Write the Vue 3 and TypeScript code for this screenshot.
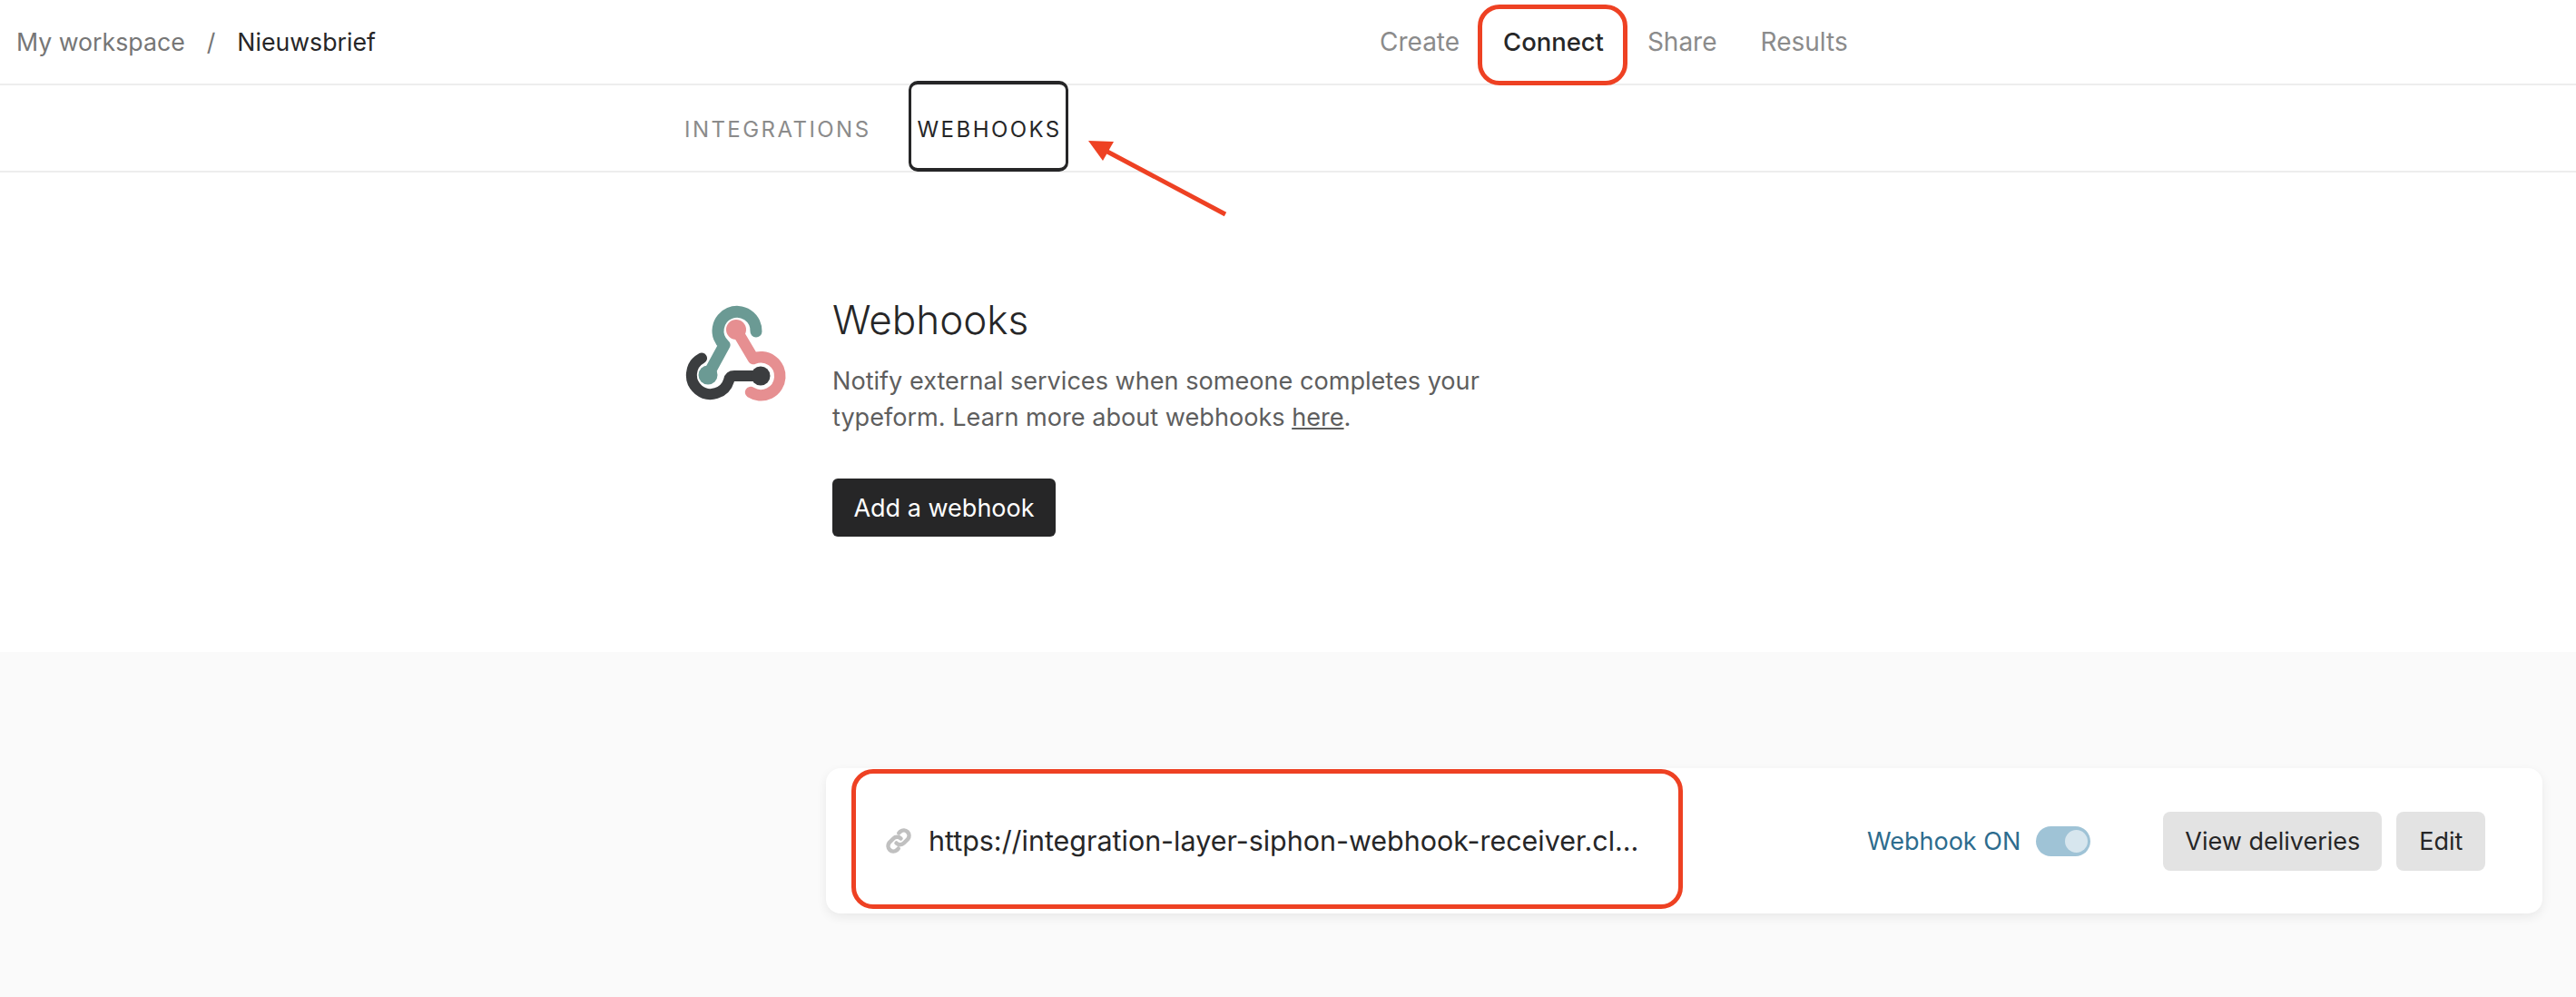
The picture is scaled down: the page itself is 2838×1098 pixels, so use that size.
<script setup lang="ts">
const navItems: { label: string; active?: boolean }[] = [
  { label: 'Create' },
  { label: 'Connect', active: true },
  { label: 'Share' },
  { label: 'Results' },
]
</script>

<template>
  <div class="page">
    <header class="topbar">
      <div class="crumbs">
        <span class="crumb-muted">My workspace</span>
        <span class="crumb-sep">/</span>
        <span class="crumb-current">Nieuwsbrief</span>
      </div>
      <nav class="nav">
        <span
          v-for="item in navItems"
          :key="item.label"
          class="nav-item"
          :class="{ active: item.active }"
        >{{ item.label }}</span>
      </nav>
    </header>

    <div class="tabs">
      <span class="tab">INTEGRATIONS</span>
      <span class="tab tab-active">WEBHOOKS</span>
      <svg class="arrow" width="170" height="100" viewBox="0 0 170 100">
        <line x1="151" y1="81" x2="21" y2="12" stroke="#ee4123" stroke-width="5" />
        <polygon points="0,0 28,1 16,22" fill="#ee4123" />
      </svg>
    </div>

    <section class="intro">
      <svg class="logo" width="114" height="108" viewBox="0 0 114 108" fill="none" stroke-linecap="round" stroke-linejoin="round">
        <path d="M78 30A21 21 0 1 0 43 45L25 78" stroke="#6b9a94" stroke-width="13" />
        <circle cx="25" cy="78" r="10.5" fill="#6b9a94" />
        <path d="M56 28L75 60A21 21 0 1 1 72 97" stroke="#e68f91" stroke-width="12.5" />
        <circle cx="56" cy="28" r="11" fill="#e68f91" />
        <path d="M18 59.5A21 21 0 1 0 48 84Q49 79 54 79L83 79" stroke="#3b3d3f" stroke-width="12" />
        <circle cx="83" cy="79" r="10.5" fill="#3b3d3f" />
      </svg>
      <div class="intro-body">
        <h1 class="title">Webhooks</h1>
        <p class="desc">
          Notify external services when someone completes your<br />typeform. Learn more about webhooks
          <a class="link">here</a>.
        </p>
        <button class="primary" type="button">Add a webhook</button>
      </div>
    </section>

    <section class="list">
      <div class="card">
        <div class="url">
          <svg class="link-icon" width="30" height="30" viewBox="0 0 24 24" fill="none" stroke="#c0c0c0" stroke-width="3.6" stroke-linecap="round">
            <path d="M10 14a4.6 4.6 0 0 0 6.6 0l3.6-3.6a4.7 4.7 0 0 0-6.6-6.6l-1.4 1.4" />
            <path d="M14 10a4.6 4.6 0 0 0-6.6 0l-3.6 3.6a4.7 4.7 0 0 0 6.6 6.6l1.4-1.4" />
          </svg>
          <span class="url-text">https://integration-layer-siphon-webhook-receiver.cl...</span>
        </div>
        <div class="status">
          <span class="status-label">Webhook ON</span>
          <span class="toggle"><span class="knob"></span></span>
        </div>
        <div class="actions">
          <button class="secondary deliveries" type="button">View deliveries</button>
          <button class="secondary edit" type="button">Edit</button>
        </div>
      </div>
    </section>
  </div>
</template>

<style>
html, body { margin: 0; background: #fff; }
</style>

<style scoped>
.page {
  width: 2838px;
  height: 1098px;
  overflow: hidden;
  background: #fff;
  font-family: Inter, "Liberation Sans", sans-serif;
  color: #262627;
  display: flex;
  flex-direction: column;
}
.topbar {
  height: 92px;
  flex: none;
  border-bottom: 2px solid #ededed;
  display: flex;
  align-items: flex-start;
  position: relative;
}
.crumbs {
  display: flex;
  align-items: center;
  height: 92px;
  padding-left: 18px;
  font-size: 26.7px;
}
.crumb-muted { color: #767676; }
.crumb-sep { color: #767676; margin: 0 24px; }
.crumb-current { color: #262627; }
.nav {
  position: absolute;
  left: 1520px;
  top: 0;
  display: flex;
  gap: 48px;
  height: 92px;
  align-items: center;
  font-size: 28px;
  color: #8b8b8b;
}
.nav-item { position: relative; }
.nav-item.active { color: #262627; font-weight: 500; font-size: 27.4px; }
.nav-item.active::after {
  content: '';
  position: absolute;
  left: -28px;
  right: -26px;
  top: -24px;
  height: 89px;
  box-sizing: border-box;
  border: 5px solid #ee4123;
  border-radius: 24px;
}
.tabs {
  height: 94px;
  flex: none;
  box-sizing: content-box;
  border-bottom: 2px solid #ededed;
  padding-left: 754px;
  display: flex;
  align-items: center;
  gap: 51px;
  position: relative;
}
.tab {
  font-size: 24px;
  letter-spacing: 2.45px;
  color: #8b8b8b;
  padding-top: 2px;
}
.tab-active {
  color: #262627;
  position: relative;
}
.tab-active::after {
  content: '';
  position: absolute;
  left: -10px;
  right: -7px;
  top: -37px;
  height: 100px;
  box-sizing: border-box;
  border: 3.5px solid #262627;
  border-top-width: 4px;
  border-bottom-width: 4px;
  border-radius: 10px;
}
.arrow {
  position: absolute;
  left: 1199px;
  top: 61px;
}
.intro {
  height: 528px;
  flex: none;
  box-sizing: border-box;
  padding: 0 0 0 755px;
  display: flex;
  align-items: flex-start;
  gap: 48px;
}
.logo { margin-top: 145px; flex: none; }
.intro-body { padding-top: 132px; }
.title {
  margin: 0;
  font-size: 44px;
  font-weight: 300;
  line-height: 60px;
}
.desc {
  margin: 18px 0 0;
  font-size: 27.1px;
  line-height: 40px;
  color: #5e5e5e;
}
.link { color: inherit; text-decoration: underline; }
.primary {
  margin-top: 47px;
  display: block;
  width: 246px;
  height: 64px;
  border: 0;
  border-radius: 6px;
  background: #262627;
  color: #fff;
  font: 27px Inter, "Liberation Sans", sans-serif;
}
.list {
  flex: 1;
  background: #fafafa;
  padding: 128px 37px 0 910px;
}
.card {
  height: 160px;
  box-sizing: border-box;
  background: #fff;
  border-radius: 16px;
  box-shadow: 0 4px 12px rgba(0, 0, 0, 0.07);
  display: flex;
  align-items: center;
}
.url {
  display: flex;
  align-items: center;
  position: relative;
  margin-left: 65px;
  width: 1082px;
  flex: none;
}
.url::after {
  content: '';
  position: absolute;
  left: -37px;
  top: -61px;
  width: 916px;
  height: 154px;
  box-sizing: border-box;
  border: 5px solid #ee4123;
  border-radius: 24px;
}
.link-icon { flex: none; }
.url-text {
  margin-left: 18px;
  font-size: 30.45px;
  color: #262627;
  white-space: nowrap;
}
.status { display: flex; align-items: center; gap: 17px; }
.status-label { font-size: 27px; color: #2d6c8e; }
.toggle {
  width: 60px;
  height: 33px;
  box-sizing: border-box;
  border-radius: 17px;
  background: #9fc3d6;
  padding: 4px 3px;
  display: flex;
  justify-content: flex-end;
}
.knob {
  width: 25px;
  height: 25px;
  border-radius: 50%;
  background: #d7e6ee;
}
.actions { display: flex; gap: 16px; margin-left: 80px; }
.secondary {
  height: 65px;
  border: 0;
  border-radius: 8px;
  background: #e3e3e3;
  color: #262627;
  font: 27px Inter, "Liberation Sans", sans-serif;
  padding: 0;
}
.deliveries { width: 241px; }
.edit { width: 98px; }
</style>
